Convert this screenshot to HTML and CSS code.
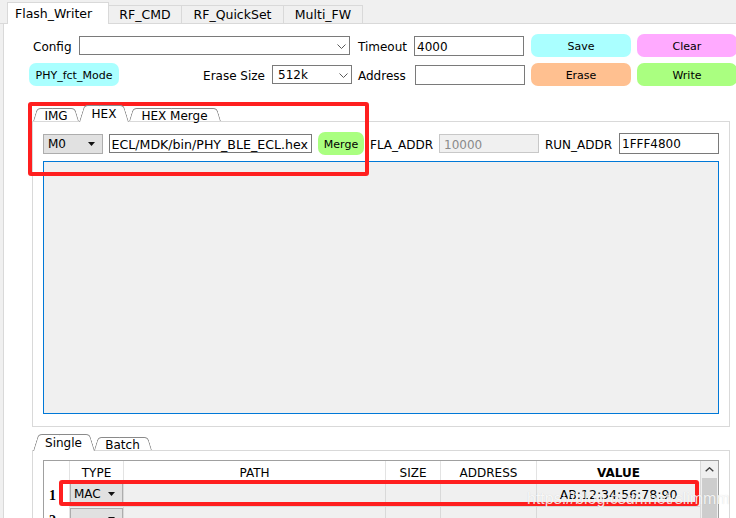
FILE: index.html
```html
<!DOCTYPE html>
<html>
<head>
<meta charset="utf-8">
<title>Flash_Writer</title>
<link rel="stylesheet" href="styles.css">
</head>
<body>
<div class="tabbar">
  <div class="mtab active w-fw">Flash_Writer</div>
  <div class="mtab w-rfc">RF_CMD</div>
  <div class="mtab w-rfq">RF_QuickSet</div>
  <div class="mtab w-mfw">Multi_FW</div>
</div>
<div class="panel">
  <div class="form">
    <div class="left">
      <span class="lbl lbl-config">Config</span>
      <div class="combo combo-config"><span></span><svg class="chev" width="9" height="5" viewBox="0 0 9 5"><path d="M0.5 0.5 L4.5 4.5 L8.5 0.5" fill="none" stroke="#5a5a5a" stroke-width="1"/></svg></div>
    </div>
    <span class="lbl">Timeout</span>
    <div class="input">4000</div>
    <div class="btn cyan">Save</div>
    <div class="btn pink">Clear</div>

    <div class="left">
      <div class="btn cyan phy">PHY_fct_Mode</div>
      <span class="lbl lbl-erase">Erase Size</span>
      <div class="combo combo-erase"><span>512k</span><svg class="chev" width="9" height="5" viewBox="0 0 9 5"><path d="M0.5 0.5 L4.5 4.5 L8.5 0.5" fill="none" stroke="#5a5a5a" stroke-width="1"/></svg></div>
    </div>
    <span class="lbl">Address</span>
    <div class="input input-addr"></div>
    <div class="btn orange">Erase</div>
    <div class="btn green">Write</div>
  </div>

  <div class="tw tw-hex">
    <div class="tabstrip">
      <div class="ttab w-img">IMG</div>
      <div class="ttab active w-hex">HEX</div>
      <div class="ttab w-hexm">HEX Merge</div>
    </div>
    <div class="pane pane-hex">
      <div class="hexrow">
        <div class="dd m0"><span>M0</span><svg width="7" height="4" viewBox="0 0 7 4"><path d="M0 0 H7 L3.5 4 Z" fill="#111"/></svg></div>
        <div class="input path">ECL/MDK/bin/PHY_BLE_ECL.hex</div>
        <div class="btn green merge">Merge</div>
        <span class="lbl lbl-fla">FLA_ADDR</span>
        <div class="input dis">10000</div>
        <span class="lbl lbl-run">RUN_ADDR</span>
        <div class="input run">1FFF4800</div>
      </div>
      <div class="bigbox"></div>
    </div>
  </div>

  <div class="tw tw-single">
    <div class="tabstrip">
      <div class="ttab active w-single">Single</div>
      <div class="ttab w-batch">Batch</div>
    </div>
    <div class="pane pane-single">
      <div class="tbl">
        <div class="th rh"></div>
        <div class="th">TYPE</div>
        <div class="th">PATH</div>
        <div class="th">SIZE</div>
        <div class="th">ADDRESS</div>
        <div class="th b">VALUE</div>
        <div class="sb">
          <div class="sb-up"><svg width="9" height="5" viewBox="0 0 9 5"><path d="M0.7 4.3 L4.5 0.8 L8.3 4.3" fill="none" stroke="#404040" stroke-width="1.4"/></svg></div>
          <div class="sb-thumb"></div>
        </div>

        <div class="rh num">1</div>
        <div class="td"><div class="dd cbx"><span>MAC</span><svg width="7" height="4" viewBox="0 0 7 4"><path d="M0 0 H7 L3.5 4 Z" fill="#111"/></svg></div></div>
        <div class="td"></div>
        <div class="td"></div>
        <div class="td"></div>
        <div class="td val">AB:12:34:56:78:90</div>

        <div class="rh num">2</div>
        <div class="td"><div class="dd cbx"><span></span><svg width="7" height="4" viewBox="0 0 7 4"><path d="M0 0 H7 L3.5 4 Z" fill="#111"/></svg></div></div>
        <div class="td"></div>
        <div class="td"></div>
        <div class="td"></div>
        <div class="td val"></div>
      </div>
    </div>
  </div>
</div>

<div class="anno anno1"></div>
<div class="anno anno2"></div>
<div class="wm">https://blog.csdn.net/slimmm</div>
</body>
</html>
```

FILE: styles.css
```css
html, body {
  margin: 0;
  padding: 0;
  overflow: hidden;
}

body {
  position: relative;
  width: 736px;
  height: 518px;
  background: #f0f0f0;
  font-family: "DejaVu Sans", sans-serif;
  font-size: 12px;
  color: #000;
}

/* main tab bar */
.tabbar {
  height: 23px;
  border-bottom: 1px solid #d9d9d9;
  display: flex;
  align-items: flex-end;
  padding-left: 7px;
}

.mtab {
  box-sizing: border-box;
  height: 18px;
  border: 1px solid #d9d9d9;
  border-bottom: none;
  background: #f0f0f0;
  margin-left: -1px;
  font-size: 12.5px;
  line-height: 17px;
  text-align: center;
  white-space: nowrap;
}

.mtab.active {
  height: 22px;
  margin-left: 0;
  margin-bottom: -1px;
  background: #fff;
  position: relative;
  z-index: 1;
  padding: 2px 0 0 7px;
  text-align: left;
}

.w-fw { width: 102px; }
.w-rfc { width: 74px; }
.w-rfq { width: 103px; }
.w-mfw { width: 80px; }

/* panel */
.panel {
  box-sizing: border-box;
  margin-left: 3px;
  border-left: 1px solid #d9d9d9;
  background: #fff;
  height: 494px;
  padding: 10px 0 0 25px;
}

.form {
  display: grid;
  grid-template-columns: 323px 50px 111px 100px 100px;
  grid-template-rows: 23px 23px;
  column-gap: 6px;
  row-gap: 6px;
  align-items: center;
}

.left {
  display: flex;
  align-items: center;
}

.lbl {
  white-space: nowrap;
  font-size: 12px;
  padding-top: 2px;
}

.lbl-config {
  margin-left: 4px;
  width: 46px;
}

.lbl-erase {
  margin-left: auto;
  margin-right: 7px;
}

.combo {
  box-sizing: border-box;
  height: 19px;
  border: 1px solid #7a7a7a;
  background: #fff;
  display: flex;
  align-items: center;
  justify-content: space-between;
  padding: 1px 3px 0 5px;
  font-size: 12px;
}

.combo-config { width: 271px; }
.combo-erase { width: 80px; }

.input {
  box-sizing: border-box;
  width: 110px;
  height: 20px;
  border: 1px solid #7a7a7a;
  background: #fff;
  padding: 1px 2px 0;
  line-height: 18px;
  font-size: 12px;
  white-space: nowrap;
  overflow: hidden;
}

.input-addr { margin-left: 1px; }

.btn {
  box-sizing: border-box;
  height: 23px;
  border-radius: 7px;
  display: flex;
  align-items: center;
  justify-content: center;
  font-size: 11px;
  padding-top: 2px;
  white-space: nowrap;
}

.cyan { background: #aaffff; }
.pink { background: #ffaaff; }
.orange { background: #ffc090; }
.green { background: #aaff80; }

.phy { width: 90px; }

/* tab widgets */
.tw {
  margin-left: 3px;
  width: 698px;
}

.tw-hex { margin-top: 19px; }
.tw-single { margin-top: 7px; }

.tabstrip {
  display: flex;
  align-items: flex-end;
  height: 16px;
  padding-left: 1px;
}

.ttab {
  position: relative;
  z-index: 0;
  box-sizing: border-box;
  height: 13px;
  padding-top: 2px;
  text-align: center;
  font-size: 12px;
  line-height: 13px;
  white-space: nowrap;
}

.ttab::before,
.ttab::after {
  content: "";
  position: absolute;
  top: 0;
  bottom: 0;
  z-index: -1;
  border-top: 1px solid #8a8a8a;
  background: #fff;
}

.ttab::before {
  left: 0;
  right: 50%;
  border-left: 1px solid #8a8a8a;
  border-top-left-radius: 4px;
  transform: skewX(-17deg);
  transform-origin: bottom left;
}

.ttab::after {
  left: 50%;
  right: 0;
  border-right: 1px solid #8a8a8a;
  border-top-right-radius: 4px;
  transform: skewX(17deg);
  transform-origin: bottom right;
}

.ttab.active {
  height: 17px;
  margin-bottom: -1px;
  padding-top: 3px;
  z-index: 1;
}

.w-img { width: 46px; }
.w-hex { width: 50px; }
.w-hexm { width: 91px; }
.w-single { width: 61px; }
.w-batch { width: 57px; }

.pane {
  border: 1px solid #d9d9d9;
  padding: 10px 10px 12px;
}

.pane-single {
  padding-top: 9px;
  height: 200px;
}

.hexrow {
  display: flex;
  align-items: center;
  gap: 6px;
  height: 23px;
}

.dd {
  box-sizing: border-box;
  height: 20px;
  border: 1px solid #adadad;
  background: #e1e1e1;
  display: flex;
  align-items: center;
  justify-content: space-between;
  font-size: 12px;
}

.m0 {
  width: 60px;
  padding: 1px 7px 0 4px;
}

.path {
  width: 203px;
  height: 19px;
  font-size: 12.6px;
  display: flex;
  justify-content: flex-end;
  padding-right: 3px;
}

.merge { width: 46px; }

.lbl-fla { width: 63px; }
.lbl-run { width: 68px; }

.dis {
  width: 100px;
  height: 19px;
  background: #f0f0f0;
  border-color: #c8c8c8;
  color: #8a8a8a;
  padding-left: 4px;
}

.run {
  width: 100px;
  height: 21px;
  line-height: 19px;
}

.bigbox {
  margin-top: 6px;
  height: 253px;
  box-sizing: border-box;
  border: 1px solid #0078d7;
  background: #f0f0f0;
}

/* table */
.tbl {
  display: grid;
  grid-template-columns: 26px 54px 262px 55px 96px 164px 17px;
  grid-template-rows: 21px 25px 25px;
  border: 1px solid #a0a0a0;
  background: #fff;
}

.th {
  box-sizing: border-box;
  border-right: 1px solid #e3e3e3;
  display: flex;
  align-items: center;
  justify-content: center;
  font-size: 12px;
  padding-top: 2px;
}

.th.b {
  font-weight: bold;
  border-right-color: #d9d9d9;
}

.rh {
  box-sizing: border-box;
  border-right: 1px solid #e3e3e3;
}

.num {
  font-family: "Liberation Serif", serif;
  font-weight: bold;
  font-size: 14px;
  padding: 2px 0 0 5px;
  display: flex;
  align-items: center;
}

.td {
  box-sizing: border-box;
  background: #f0f0f0;
  border-right: 1px solid #d9d9d9;
  border-bottom: 1px solid #d9d9d9;
}

.cbx {
  margin-top: 1px;
  padding: 1px 7px 0 3px;
}

.val {
  display: flex;
  align-items: center;
  justify-content: center;
  font-size: 12.5px;
  padding-top: 1px;
}

.sb {
  grid-column: 7;
  grid-row: 1 / span 3;
  background: #f0f0f0;
  display: flex;
  flex-direction: column;
  align-items: center;
}

.sb-up {
  height: 17px;
  width: 100%;
  display: flex;
  align-items: center;
  justify-content: center;
}

.sb-thumb {
  width: 15px;
  flex: 1;
  background: #cdcdcd;
}

/* annotations drawn over the screenshot */
.anno {
  position: absolute;
  box-sizing: border-box;
  border: 4px solid #ff1f1f;
  border-radius: 3px;
  pointer-events: none;
}

.anno1 {
  left: 28px;
  top: 102px;
  width: 341px;
  height: 74px;
}

.anno2 {
  left: 59px;
  top: 480px;
  width: 640px;
  height: 26px;
}

.wm {
  position: absolute;
  left: 527px;
  top: 490px;
  font-family: "Liberation Sans", sans-serif;
  font-size: 16px;
  line-height: 18px;
  color: rgba(255, 255, 255, 0.85);
  text-shadow: 0 0 1px rgba(0, 0, 0, 0.15);
  white-space: nowrap;
  pointer-events: none;
}
```
